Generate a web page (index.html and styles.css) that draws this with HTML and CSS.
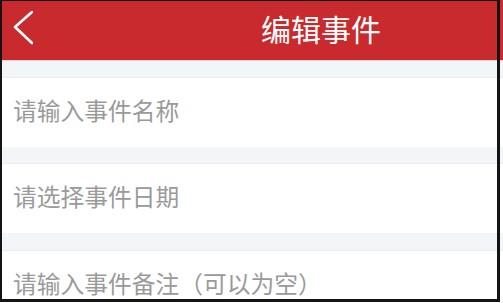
FILE: index.html
```html
<!DOCTYPE html>
<html lang="zh-CN">
<head>
  <meta charset="UTF-8" />
  <title>编辑事件</title>
  <link rel="stylesheet" href="styles.css">
</head>
<body>
  <div class="screen">
    <!-- HEADER -->
    <header class="topbar">
      <span class="back">
        <svg width="20" height="34" viewBox="0 0 20 34">
          <polyline points="19,1 2,16 19,32" fill="none" stroke="#fff" stroke-width="2.6" stroke-linecap="round" stroke-linejoin="round" />
        </svg>
      </span>
      <h1 class="title">编辑事件</h1>
    </header>

    <!-- FORM -->
    <div class="gap"></div>
    <div class="field">请输入事件名称</div>
    <div class="gap gap-sm"></div>
    <div class="field">请选择事件日期</div>
    <div class="gap"></div>
    <div class="field">请输入事件备注（可以为空）</div>
  </div>
  <div class="frame"></div>
</body>
</html>
```

FILE: styles.css
```css
:root {
  --red: #c92a2d;
  --band: #f3f6f9;
  --hint: #9a9a9a;
}
* {
  box-sizing: border-box;
  margin: 0;
  padding: 0;
  font-family: "Noto Sans CJK SC", "Noto Sans", sans-serif;
}
body {
  width: 503px;
  height: 303px;
  overflow: hidden;
  background: #fff;
  position: relative;
}
.screen {
  height: 303px;
  overflow: hidden;
}

/* HEADER */
.topbar {
  height: 60px;
  background: var(--red);
  display: flex;
  align-items: center;
  padding: 0 0 4px 13px;
  box-shadow: 0 1px 1px rgba(0, 0, 0, 0.12);
  position: relative;
}
.back {
  display: flex;
  width: 20px;
}
.title {
  margin-left: 228px;
  color: #fff;
  font-size: 30px;
  font-weight: 400;
  line-height: 1;
}

/* ROWS */
.gap {
  height: 18px;
  background: var(--band);
  border-bottom: 1px solid #eaeef2;
}
.gap-sm {
  height: 17px;
}
.field {
  height: 69px;
  display: flex;
  align-items: center;
  padding: 0 0 5px 13px;
  font-size: 23.75px;
  line-height: 1;
  color: var(--hint);
  white-space: nowrap;
}

/* FRAME */
.frame {
  position: absolute;
  left: 0;
  top: 0;
  width: 500px;
  height: 302px;
  border-style: solid;
  border-color: #141414;
  border-width: 1px 3px 3px 2px;
  pointer-events: none;
}
```
